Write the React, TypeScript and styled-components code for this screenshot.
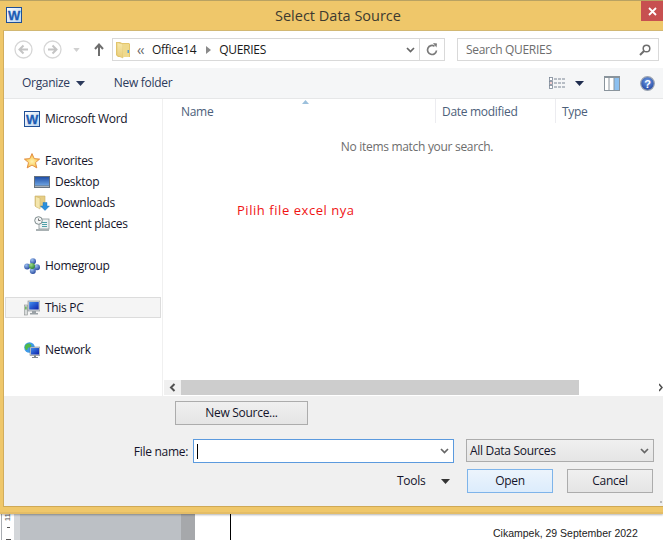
import React from "react";
import styled, { createGlobalStyle } from "styled-components";

const Global = createGlobalStyle`
  html, body { margin: 0; padding: 0; background: #fff; }
  body { font-family: "Open Sans", "Noto Sans", sans-serif; }
`;

const Page = styled.div`
  width: 663px; height: 540px; overflow: hidden; display: flex; flex-direction: column; background: #fff;
  font-size: 12px; color: #1a1a2a; letter-spacing: -0.3px;
`;
const Frame = styled.div`
  height: 514px; flex: none; display: flex; flex-direction: column; box-sizing: border-box;
  background: #efc76a; border-top: 1px solid #b9a262; border-bottom: 2px solid #e4bd66; position: relative; z-index: 1;
  box-shadow: 0 1px 2px rgba(0, 0, 0, 0.3);
`;
const TitleBar = styled.div`height: 29px; flex: none; display: flex; align-items: center; justify-content: center;`;
const Title = styled.div`font-size: 14.5px; color: #3c3a30; letter-spacing: 0; padding-left: 13px;`;
const WordBadge = styled.div`position: absolute; left: 6px; top: 6px; line-height: 0;`;
const Close = styled.div`
  position: absolute; right: 0; top: 0; width: 22px; height: 20px; background: #c75050; display: flex; align-items: center; justify-content: center; line-height: 0;
`;
const Grip = styled.div`position: absolute; right: 1px; bottom: 9px; width: 2px; height: 2px; background: #b8b8b8;`;
const Client = styled.div`
  flex: 1; margin: 0 0 5px 3px; display: flex; flex-direction: column; background: #fff; min-height: 0;
  border-top: 1px solid #d2b873; border-left: 1px solid #d2ad5c; border-bottom: 1px solid #cfa955;
`;
const NavRow = styled.div`height: 37px; flex: none; display: flex; align-items: center; box-sizing: border-box; padding: 0 0 0 10px;`;
const NavIcons = styled.div`display: flex; align-items: center; width: 98px; flex: none; line-height: 0; gap: 0;`;
const NavSpacer = styled.span`width: 10px; flex: none;`;
const NavDrop = styled.span`margin: 0 14px 0 11px; line-height: 0;`;
const Address = styled.div`
  width: 333px; height: 23px; flex: none; box-sizing: border-box; border: 1px solid #d9d9d9; display: flex; align-items: center; margin-right: 12px;
`;
const Crumbs = styled.div`flex: 1; display: flex; align-items: center; padding-left: 3px; gap: 5px; color: #1a1a1a; line-height: 0;`;
const CrumbText = styled.span`line-height: 16px;`;
const CrumbChevron = styled.span`color: #666; font-size: 14px; line-height: 16px; width: 10px; flex: none; letter-spacing: -1px;`;
const CrumbArrow = styled.span`margin: 0 3px 0 5px; line-height: 0;`;
const AddrEnd = styled.div`width: 25px; flex: none; height: 100%; box-sizing: border-box; display: flex; align-items: center; justify-content: center; line-height: 0; border-left: 1px solid #d9d9d9;`;
const AddrDrop = styled.div`width: 17px; flex: none; display: flex; align-items: center; justify-content: center; line-height: 0;`;
const Search = styled.div`
  width: 202px; height: 23px; flex: none; box-sizing: border-box; border: 1px solid #d9d9d9; display: flex; align-items: center; justify-content: space-between; padding: 0 7px 0 8px; color: #6d6d6d; line-height: 0;
`;
const SearchText = styled.span`line-height: 16px;`;
const CommandBar = styled.div`
  height: 31px; flex: none; box-sizing: border-box; background: #f5f6f7; border-bottom: 1px solid #e6e7e8; display: flex; align-items: center; padding: 0 8px 0 18px; color: #2c3a5c;
`;
const Cmd = styled.span`display: flex; align-items: center; gap: 6px; margin-right: 29px; line-height: 16px;`;
const CmdRight = styled.div`margin-left: auto; display: flex; align-items: center; line-height: 0;`;
const ViewIcon = styled.span`margin-right: 10px; line-height: 0;`;
const PaneIcon = styled.span`margin: 0 20px; line-height: 0;`;
const Main = styled.div`flex: 1; display: flex; min-height: 0; background: #fff;`;
const NavPane = styled.div`width: 159px; flex: none; box-sizing: border-box; border-right: 1px solid #f0f0f0; padding: 9px 0 0 1px; display: flex; flex-direction: column;`;
const NavItem = styled.div<{ $indent?: boolean; $gap?: number; $selected?: boolean }>`
  height: 21px; flex: none; box-sizing: border-box; display: flex; align-items: center; gap: 5px; color: #14142a;
  margin-top: ${p => p.$gap ?? 0}px; padding-left: ${p => (p.$indent ? 29 : 19)}px;
  ${p => (p.$selected ? "background: #f5f5f5; border: 1px solid #dcdcdc; padding-left: 18px; width: 156px;" : "")}
`;
const NavLabel = styled.span`line-height: 16px;`;
const IconBox = styled.span`width: 16px; height: 16px; flex: none; line-height: 0;`;
const ListPane = styled.div`flex: 1; min-width: 0; display: flex; flex-direction: column;`;
const ColHeads = styled.div`height: 27px; flex: none; display: flex; color: #4c607a; position: relative;`;
const Col = styled.div<{ $w: number; $pad?: number }>`width: ${p => p.$w}px; flex: none; box-sizing: border-box; padding: 4px 0 0 ${p => p.$pad ?? 6}px; border-right: 1px solid #ececf0; height: 24px;`;
const ColLast = styled.div`flex: 1; padding: 4px 0 0 6px;`;
const SortMark = styled.div`position: absolute; left: 139px; top: 1px; line-height: 0;`;
const ListBody = styled.div`flex: 1; min-height: 0; display: flex; flex-direction: column; overflow: hidden;`;
const Empty = styled.div`text-align: center; color: #6d6d6d; height: 20px; padding: 12px 0 0 8px;`;
const Note = styled.div`color: #f01414; font-size: 13px; letter-spacing: 0.55px; margin: 43px 0 0 74px;`;
const HScroll = styled.div`height: 15px; flex: none; display: flex; align-items: center; padding-left: 1px; background: #fff; margin-bottom: 1px;`;
const ScrollBtn = styled.div`width: 17px; height: 15px; background: #f0f0f0; display: flex; align-items: center; justify-content: center; line-height: 0; flex: none;`;
const Thumb = styled.div`width: 398px; height: 15px; background: #cdcdcd; flex: none;`;
const ScrollTail = styled.div`flex: 1; display: flex; justify-content: flex-end; line-height: 0;`;
const Footer = styled.div`height: 110px; flex: none; background: #f0f0f0; display: flex; flex-direction: column; padding: 5px 0 0 0; box-sizing: border-box;`;
const Btn = styled.div<{ $w: number; $primary?: boolean }>`
  width: ${p => p.$w}px; height: 24px; flex: none; box-sizing: border-box; display: flex; align-items: center; justify-content: center; color: #14142a; padding-bottom: 2px;
  border: 1px solid ${p => (p.$primary ? "#7eb4ea" : "#acacac")};
  background: ${p => (p.$primary ? "linear-gradient(#ecf4fc, #dcecfc)" : "linear-gradient(#f0f0f0, #e5e5e5)")};
`;
const SourceRow = styled.div`display: flex; padding-left: 171px; height: 24px;`;
const NameRow = styled.div`display: flex; align-items: center; margin-top: 14px; height: 24px;`;
const NameLabel = styled.span`width: 184px; flex: none; text-align: right; color: #14142a; padding-right: 5px;`;
const NameInput = styled.div`width: 261px; height: 24px; flex: none; box-sizing: border-box; border: 1px solid #5b9ade; background: #fff; display: flex; align-items: center; justify-content: space-between; padding: 0 4px 0 3px; line-height: 0;`;
const Caret = styled.div`width: 1px; height: 15px; background: #000;`;
const TypeSelect = styled.div`width: 188px; height: 23px; flex: none; align-self: flex-start; margin-left: 12px; box-sizing: border-box; border: 1px solid #acacac; background: linear-gradient(#f0f0f0, #e5e5e5); display: flex; align-items: center; justify-content: space-between; padding: 0 4px 0 3px; color: #14142a; line-height: 0;`;
const SelectText = styled.span`line-height: 16px;`;
const ActionRow = styled.div`display: flex; align-items: center; margin-top: 6px; height: 24px; padding-left: 393px; gap: 14px;`;
const Tools = styled.div`width: 56px; flex: none; display: flex; align-items: center; gap: 16px; color: #14142a; line-height: 0;`;
const ToolsText = styled.span`line-height: 16px;`;
const Doc = styled.div`flex: 1; display: flex; min-height: 0; background: #fff; overflow: hidden;`;
const Ruler = styled.div`
  width: 13px; margin-left: 1px; flex: none; background: #fff; border-left: 1px solid #a9adb2; box-sizing: border-box; position: relative; overflow: hidden;
  color: #555; display: flex; flex-direction: column; align-items: center;
`;
const RulerNum = styled.span`font-family: "Liberation Sans", sans-serif; font-size: 8px; line-height: 8px; letter-spacing: 0; writing-mode: vertical-rl; transform: rotate(180deg); margin-top: -1px;`;
const RulerDash = styled.span<{ $w: number; $top: number }>`width: ${p => p.$w}px; height: 1px; background: #555; flex: none; margin-top: ${p => p.$top}px;`;
const Gutter = styled.div`width: 6px; flex: none; background: #d4d7da;`;
const Gray = styled.div`width: 161px; flex: none; background: #bcc0c5;`;
const Shadow = styled.div`width: 14px; flex: none; background: #a6a8ab;`;
const Sheet = styled.div`flex: 1; position: relative; background: #fff;`;
const Rule = styled.div`width: 1px; height: 100%; background: #000; margin-left: 35px;`;
const DateText = styled.div`position: absolute; left: 298px; top: 13px; font-family: "Liberation Sans", Arial, sans-serif; font-size: 10.5px; color: #222; letter-spacing: 0; white-space: nowrap;`;

const Chevron = ({ color = "#666" }: { color?: string }) => (
  <svg width="9" height="6" viewBox="0 0 9 6"><path d="M1 1l3.500 3.500L8 1" fill="none" stroke={color} strokeWidth="1.700" /></svg>
);
const Tri = ({ color = "#333", w = 9 }: { color?: string; w?: number }) => (
  <svg width={w} height="5" viewBox="0 0 9 5" preserveAspectRatio="none"><path d="M0 0h9L4.500 5z" fill={color} /></svg>
);
const WordIcon = () => (
  <svg width="16" height="16" viewBox="0 0 16 16">
    <defs>
      <linearGradient id="wbg" x1="0" y1="0" x2="1" y2="1"><stop offset="0" stopColor="#ffffff" /><stop offset="1" stopColor="#b9d3ee" /></linearGradient>
    </defs>
    <rect x=".5" y=".5" width="15" height="15" fill="url(#wbg)" stroke="#1f4f96" />
    <text x="8" y="13" textAnchor="middle" fontFamily="Liberation Sans" fontWeight="700" fontSize="13" letterSpacing="-0.5" fill="#1c5cb4" stroke="#1c5cb4" strokeWidth=".3">W</text>
  </svg>
);
const Star = () => (
  <svg width="16" height="16" viewBox="0 0 16 16">
    <defs>
      <radialGradient id="star" cx=".5" cy=".55" r=".55"><stop offset="0" stopColor="#fff2b0" /><stop offset=".6" stopColor="#fbd267" /><stop offset="1" stopColor="#f0993c" /></radialGradient>
    </defs>
    <path d="M8 .6l2.200 5 5.400.5-4.100 3.500 1.300 5.300L8 12.100l-4.800 2.800 1.300-5.300L.4 6.100l5.400-.5z" fill="url(#star)" stroke="#e08a3c" strokeWidth=".9" />
  </svg>
);
const DesktopIcon = () => (
  <svg width="16" height="16" viewBox="0 0 16 16">
    <defs>
      <linearGradient id="desk" x1="0" y1="0" x2="0" y2="1"><stop offset="0" stopColor="#1f4fa8" /><stop offset="1" stopColor="#6fa4e0" /></linearGradient>
    </defs>
    <rect x="0" y="2" width="16" height="12" fill="#66727e" />
    <rect x="1" y="3" width="14" height="8.500" fill="url(#desk)" />
    <rect x="1" y="12" width="14" height="1" fill="#a7b0b8" />
  </svg>
);
const DownloadsIcon = () => (
  <svg width="16" height="16" viewBox="0 0 16 16">
    <path d="M1 1h4l6 0v11H3l-2-1z" fill="#e6cd85" stroke="#cbb066" strokeWidth=".6" />
    <path d="M1.500 1.500L6 3v11l-4.500-2.500z" fill="#f4e6ad" stroke="#cbb066" strokeWidth=".5" />
    <path d="M9 7.500h4v3.500h2.500L11 15.500 6.500 11H9z" fill="#2b8fdc" stroke="#1a6cb4" strokeWidth=".4" />
  </svg>
);
const RecentIcon = () => (
  <svg width="16" height="16" viewBox="0 0 16 16">
    <rect x="5" y="3" width="10" height="10" fill="#eef1f2" stroke="#8a9698" strokeWidth=".8" />
    <circle cx="4.500" cy="4.500" r="3.800" fill="#f4f6f6" stroke="#7d8a8c" />
    <path d="M4.500 2.500v2h2" fill="none" stroke="#555" strokeWidth=".8" />
    <rect x="8" y="6" width="5" height="1" fill="#4fa0a8" />
    <rect x="8" y="8" width="5" height="1" fill="#4fa0a8" />
    <rect x="8" y="10" width="5" height="1" fill="#4fa0a8" />
    <rect x="2" y="13" width="13" height="2" fill="#a9b1b3" />
  </svg>
);
const HomegroupIcon = () => (
  <svg width="16" height="16" viewBox="0 0 16 16">
    <defs>
      <radialGradient id="hb" cx=".35" cy=".3" r=".8"><stop offset="0" stopColor="#9cc0f0" /><stop offset="1" stopColor="#1d3f98" /></radialGradient>
      <radialGradient id="hg" cx=".35" cy=".3" r=".8"><stop offset="0" stopColor="#9fdc8a" /><stop offset="1" stopColor="#1f7a2c" /></radialGradient>
    </defs>
    <circle cx="9" cy="3.200" r="3" fill="url(#hb)" />
    <circle cx="3.100" cy="8.500" r="3" fill="url(#hb)" />
    <circle cx="13" cy="9.200" r="3" fill="url(#hb)" />
    <circle cx="8.800" cy="13" r="3" fill="url(#hb)" />
    <circle cx="8" cy="8" r="3" fill="url(#hg)" />
  </svg>
);
const PCIcon = () => (
  <svg width="16" height="16" viewBox="0 0 16 16">
    <defs>
      <linearGradient id="pcs" x1="0" y1="0" x2="1" y2="1"><stop offset="0" stopColor="#3f8df0" /><stop offset="1" stopColor="#0d1fa8" /></linearGradient>
    </defs>
    <rect x=".5" y="5" width="3" height="10" fill="#d9dcdc" stroke="#8d9292" strokeWidth=".6" />
    <rect x="1.200" y="6.500" width="1.400" height="3" fill="#56b04a" />
    <rect x="4" y="1" width="12" height="10" fill="#d5d9dc" stroke="#80878c" strokeWidth=".6" />
    <rect x="5.200" y="2" width="9.500" height="7.500" fill="url(#pcs)" />
    <path d="M8 11h4v2H8zM6 13h8v1.500H6z" fill="#9aa1a6" />
  </svg>
);
const NetworkIcon = () => (
  <svg width="16" height="16" viewBox="0 0 16 16">
    <defs>
      <linearGradient id="nets" x1="0" y1="0" x2="1" y2="1"><stop offset="0" stopColor="#3f8df0" /><stop offset="1" stopColor="#0d1fa8" /></linearGradient>
    </defs>
    <circle cx="5.500" cy="5.500" r="5.300" fill="#3d9ae8" />
    <path d="M2 2.500c2-1.500 4-1 5 0s0 3-2 3-1 3-2.500 2.500S0 4 2 2.500z" fill="#4fb84a" />
    <rect x="6" y="5" width="10" height="8.500" fill="#cdd3d8" stroke="#6a7076" strokeWidth=".5" />
    <rect x="7" y="6" width="8" height="6.500" fill="url(#nets)" />
    <path d="M10 13.500h2V15h2v1H8v-1h2z" fill="#7f878c" />
  </svg>
);
const FolderIcon = () => (
  <svg width="16" height="18" viewBox="0 0 16 18">
    <defs>
      <linearGradient id="fold" x1="0" y1="0" x2="0" y2="1"><stop offset="0" stopColor="#f8e9ac" /><stop offset="1" stopColor="#e9cd7a" /></linearGradient>
    </defs>
    <path d="M0 1h4l2 1h7l1 1v13H2l-2-2z" fill="#e5c66c" />
    <path d="M1 1.500l6 1.500v14l-6-2.500z" fill="url(#fold)" stroke="#d9bd66" strokeWidth=".5" />
    <path d="M7 3h6v13H7z" fill="#efd98c" />
    <rect x="11.500" y="9" width="1.500" height="3" fill="#5a9ecf" />
  </svg>
);
const RoundNav = ({ dir }: { dir: "l" | "r" }) => (
  <svg width="19" height="19" viewBox="0 0 19 19">
    <circle cx="9.500" cy="9.500" r="8.500" fill="none" stroke="#d6d6d6" strokeWidth="1.300" />
    <path d={dir === "l" ? "M14 9.500H6M9.500 5.500l-4 4 4 4" : "M5 9.500h8M9.500 5.500l4 4-4 4"} fill="none" stroke="#c4c4c4" strokeWidth="2" />
  </svg>
);

export default function App() {
  return (
    <Page>
      <Global />
      <Frame>
        <WordBadge><WordIcon /></WordBadge>
        <TitleBar><Title>Select Data Source</Title></TitleBar>
        <Close>
          <svg width="9" height="9" viewBox="0 0 9 9"><path d="M1 1l7 7M8 1L1 8" stroke="#fff" strokeWidth="1.800" /></svg>
        </Close>
        <Grip />
        <Client>
          <NavRow>
            <NavIcons>
              <RoundNav dir="l" />
              <NavSpacer />
              <RoundNav dir="r" />
              <NavDrop><svg width="7" height="4" viewBox="0 0 8 5"><path d="M0 0h8L4 5z" fill="#d0d0d0" /></svg></NavDrop>
              <svg width="10" height="13" viewBox="0 0 10 13"><path d="M5 13V1.500M1 6l4-4.500L9 6" fill="none" stroke="#6e6e6e" strokeWidth="2" /></svg>
            </NavIcons>
            <Address>
              <Crumbs>
                <FolderIcon />
                <CrumbChevron>‹‹</CrumbChevron>
                <CrumbText>Office14</CrumbText>
                <CrumbArrow><svg width="5" height="8" viewBox="0 0 5 8"><path d="M0 0l5 4-5 4z" fill="#8a8a8a" /></svg></CrumbArrow>
                <CrumbText>QUERIES</CrumbText>
              </Crumbs>
              <AddrDrop><Chevron /></AddrDrop>
              <AddrEnd>
                <svg width="12" height="13" viewBox="0 0 12 13"><path d="M10.500 7.500a4.500 4.500 0 1 1-2-4.300" fill="none" stroke="#7a7a7a" strokeWidth="1.700" /><path d="M7 0l4 .5-.5 4z" fill="#7a7a7a" /></svg>
              </AddrEnd>
            </Address>
            <Search>
              <SearchText>Search QUERIES</SearchText>
              <svg width="12" height="12" viewBox="0 0 12 12"><circle cx="7.500" cy="4.500" r="3.300" fill="none" stroke="#6e6e6e" strokeWidth="1.500" /><path d="M5 7l-4 4" stroke="#6e6e6e" strokeWidth="2" /></svg>
            </Search>
          </NavRow>
          <CommandBar>
            <Cmd>Organize <Tri color="#2c3a5c" /></Cmd>
            <Cmd>New folder</Cmd>
            <CmdRight>
              <ViewIcon>
                <svg width="16" height="12" viewBox="0 0 16 12">
                  <g fill="#fff" stroke="#7a8594" strokeWidth=".8"><rect x=".5" y=".5" width="3" height="3" /><rect x=".5" y="4.500" width="3" height="3" /><rect x=".5" y="8.500" width="3" height="3" /></g>
                  <rect x="1.500" y="5.500" width="1" height="1" fill="#d04040" />
                  <path d="M5 2h11M5 6h11M5 10h11" stroke="#7a8594" strokeDasharray="3 1" />
                </svg>
              </ViewIcon>
              <Tri color="#1f2d4f" />
              <PaneIcon>
                <svg width="16" height="15" viewBox="0 0 16 15">
                  <rect x=".5" y=".5" width="15" height="14" fill="#fff" stroke="#8a949c" />
                  <rect x="0" y="0" width="16" height="2" fill="#8a949c" />
                  <rect x="10" y="2" width="5" height="12" fill="#8cc0f0" />
                  <path d="M5 2v12M10 2v12" stroke="#8a949c" />
                </svg>
              </PaneIcon>
              <svg width="15" height="15" viewBox="0 0 15 15">
                <defs>
                  <radialGradient id="help" cx=".5" cy=".35" r=".7"><stop offset="0" stopColor="#6f9ce4" /><stop offset="1" stopColor="#1c3f9c" /></radialGradient>
                </defs>
                <circle cx="7.500" cy="7.500" r="6.800" fill="url(#help)" stroke="#9aa3b0" strokeWidth="1.200" />
                <text x="7.500" y="11.500" textAnchor="middle" fontFamily="Liberation Sans" fontWeight="700" fontSize="11" fill="#fff">?</text>
              </svg>
            </CmdRight>
          </CommandBar>
          <Main>
            <NavPane>
              <NavItem><IconBox><WordIcon /></IconBox><NavLabel>Microsoft Word</NavLabel></NavItem>
              <NavItem $gap={21}><IconBox><Star /></IconBox><NavLabel>Favorites</NavLabel></NavItem>
              <NavItem $indent><IconBox><DesktopIcon /></IconBox><NavLabel>Desktop</NavLabel></NavItem>
              <NavItem $indent><IconBox><DownloadsIcon /></IconBox><NavLabel>Downloads</NavLabel></NavItem>
              <NavItem $indent><IconBox><RecentIcon /></IconBox><NavLabel>Recent places</NavLabel></NavItem>
              <NavItem $gap={21}><IconBox><HomegroupIcon /></IconBox><NavLabel>Homegroup</NavLabel></NavItem>
              <NavItem $gap={21} $selected><IconBox><PCIcon /></IconBox><NavLabel>This PC</NavLabel></NavItem>
              <NavItem $gap={21}><IconBox><NetworkIcon /></IconBox><NavLabel>Network</NavLabel></NavItem>
            </NavPane>
            <ListPane>
              <ColHeads>
                <SortMark><svg width="7" height="4" viewBox="0 0 7 4"><path d="M0 4l3.500-4L7 4z" fill="#9cc0dc" /></svg></SortMark>
                <Col $w={273} $pad={18}>Name</Col>
                <Col $w={120}>Date modified</Col>
                <ColLast>Type</ColLast>
              </ColHeads>
              <ListBody>
                <Empty>No items match your search.</Empty>
                <Note>Pilih file excel nya</Note>
              </ListBody>
              <HScroll>
                <ScrollBtn><svg width="7" height="9" viewBox="0 0 7 9"><path d="M5.500 1L2 4.500 5.500 8" fill="none" stroke="#505050" strokeWidth="2" /></svg></ScrollBtn>
                <Thumb />
                <ScrollTail><svg width="4" height="9" viewBox="0 0 4 9"><path d="M0 1l3 3.500L0 8" fill="none" stroke="#505050" strokeWidth="1.500" /></svg></ScrollTail>
              </HScroll>
            </ListPane>
          </Main>
          <Footer>
            <SourceRow><Btn $w={133}>New Source...</Btn></SourceRow>
            <NameRow>
              <NameLabel>File name:</NameLabel>
              <NameInput><Caret /><Chevron /></NameInput>
              <TypeSelect><SelectText>All Data Sources</SelectText><Chevron /></TypeSelect>
            </NameRow>
            <ActionRow>
              <Tools><ToolsText>Tools</ToolsText><Tri /></Tools>
              <Btn $w={86} $primary>Open</Btn>
              <Btn $w={86}>Cancel</Btn>
            </ActionRow>
          </Footer>
        </Client>
      </Frame>
      <Doc>
        <Ruler>
          <RulerNum>11</RulerNum>
          <RulerDash $w={3} $top={6} />
          <RulerDash $w={5} $top={11} />
        </Ruler>
        <Gutter />
        <Gray />
        <Shadow />
        <Sheet>
          <Rule />
          <DateText>Cikampek, 29 September 2022</DateText>
        </Sheet>
      </Doc>
    </Page>
  );
}
